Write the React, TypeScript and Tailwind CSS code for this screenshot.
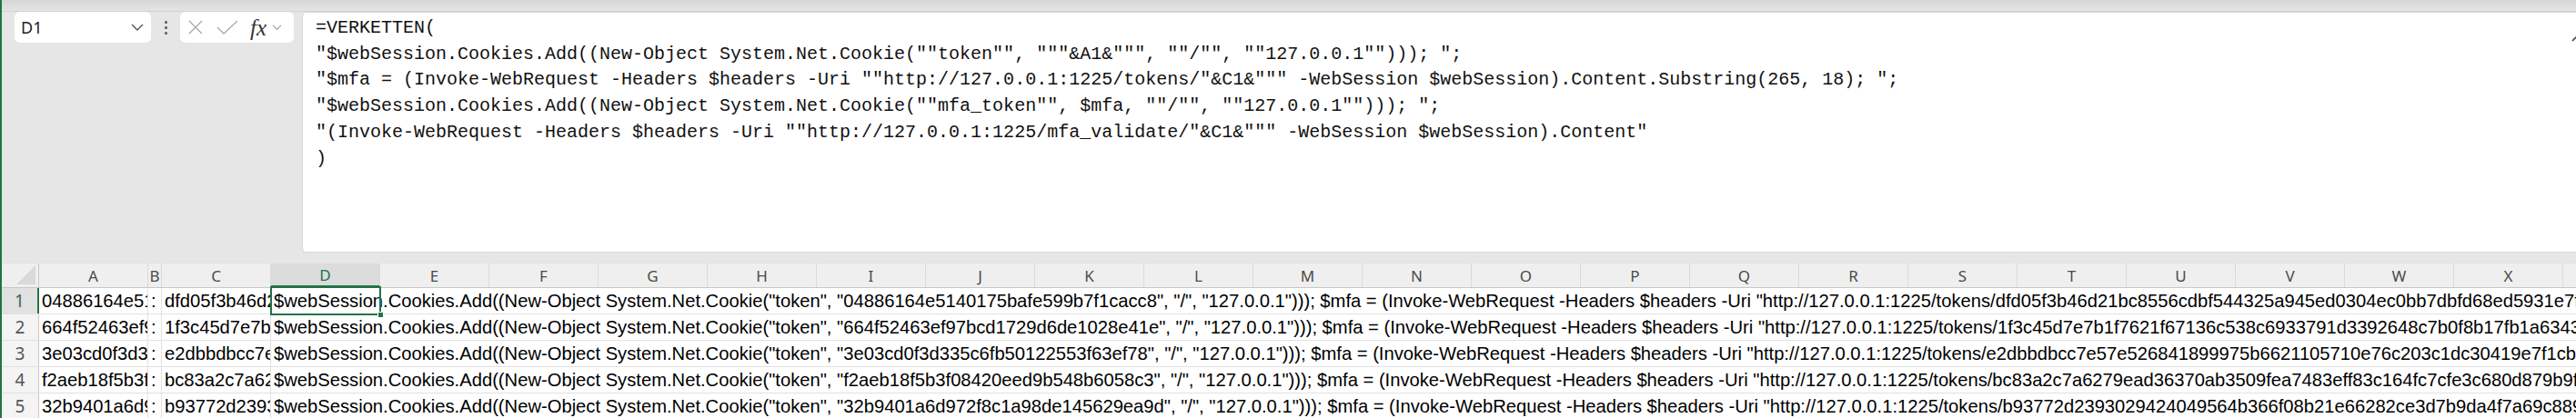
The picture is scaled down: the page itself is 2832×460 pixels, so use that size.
import React from 'react'

const COLS = 'ABCDEFGHIJKLMNOPQRSTUVWXY'.split('')
const colWidth = (c: string) => (c === 'B' ? 'w-[15px]' : 'w-[120px]')

const ROWS = [
  ['04886164e5140175bafe599b7f1cacc8', 'dfd05f3b46d21bc8556cdbf544325a945ed0304ec0bb7dbfd68ed5931e7ff6ec'],
  ['664f52463ef97bcd1729d6de1028e41e', '1f3c45d7e7b1f7621f67136c538c6933791d3392648c7b0f8b17fb1a6343ebc4'],
  ['3e03cd0f3d335c6fb50122553f63ef78', 'e2dbbdbcc7e57e526841899975b6621105710e76c203c1dc30419e7f1cba52d1'],
  ['f2aeb18f5b3f08420eed9b548b6058c3', 'bc83a2c7a6279ead36370ab3509fea7483eff83c164fc7cfe3c680d879b9f9d2'],
  ['32b9401a6d972f8c1a98de145629ea9d', 'b93772d2393029424049564b366f08b21e66282ce3d7b9da4f7a69c889101a7e'],
]

const FORMULA = [
  '=VERKETTEN(',
  '"$webSession.Cookies.Add((New-Object System.Net.Cookie(""token"", """&A1&""", ""/"", ""127.0.0.1""))); ";',
  '"$mfa = (Invoke-WebRequest -Headers $headers -Uri ""http://127.0.0.1:1225/tokens/"&C1&""" -WebSession $webSession).Content.Substring(265, 18); ";',
  '"$webSession.Cookies.Add((New-Object System.Net.Cookie(""mfa_token"", $mfa, ""/"", ""127.0.0.1""))); ";',
  '"(Invoke-WebRequest -Headers $headers -Uri ""http://127.0.0.1:1225/mfa_validate/"&C1&""" -WebSession $webSession).Content"',
  ')',
]

function cellText(a: string, c: string) {
  return (
    `$webSession.Cookies.Add((New-Object System.Net.Cookie("token", "${a}", "/", "127.0.0.1"))); ` +
    `$mfa = (Invoke-WebRequest -Headers $headers -Uri "http://127.0.0.1:1225/tokens/${c}" -WebSession $webSession).Content.Substring(265, 18); ` +
    `$webSession.Cookies.Add((New-Object System.Net.Cookie("mfa_token", $mfa, "/", "127.0.0.1")));`
  )
}

function Chevron({ className }: { className?: string }) {
  return (
    <svg className={className} viewBox="0 0 14 8" fill="none" stroke="currentColor" strokeWidth="1.4">
      <path d="M1 1l6 6 6-6" />
    </svg>
  )
}

export default function App() {
  return (
    <div className="relative h-[460px] w-[2832px] overflow-hidden border-l-2 border-[#217346] bg-[#e6e6e6]">
      {/* ribbon shadow */}
      <div className="h-[13px] border-b border-[#d2d2d2] bg-gradient-to-b from-[#d6d6d6] to-[#e4e4e4]" />

      {/* name box + formula bar */}
      <div className="flex h-[266px] items-start">
        <div className="ml-[14px] flex h-[34px] w-[150px] items-center justify-between rounded-[6px] bg-white pl-[7px] pr-[8px] text-[#222]">
          <span className="font-['Noto_Sans',sans-serif] text-[18px]">D1</span>
          <Chevron className="h-[8px] w-[14px] text-[#555]" />
        </div>
        <div className="flex h-[34px] w-[32px] flex-col items-center justify-center gap-[3px]">
          <span className="h-[3px] w-[3px] rounded-full bg-[#555]" />
          <span className="h-[3px] w-[3px] rounded-full bg-[#555]" />
          <span className="h-[3px] w-[3px] rounded-full bg-[#555]" />
        </div>
        <div className="flex h-[34px] w-[125px] items-center rounded-[6px] bg-white pl-[8px]">
          <svg className="h-[16px] w-[18px] text-[#a8a8a8]" viewBox="0 0 18 16" fill="none" stroke="currentColor" strokeWidth="1.3">
            <path d="M2 1l14 14M16 1L2 15" />
          </svg>
          <svg className="ml-[14px] h-[16px] w-[24px] text-[#a8a8a8]" viewBox="0 0 24 16" fill="none" stroke="currentColor" strokeWidth="1.3">
            <path d="M1 8l7 7L23 1" />
          </svg>
          <span className="ml-[13px] font-['Liberation_Serif',serif] text-[25px] italic leading-none text-[#333]">fx</span>
          <Chevron className="ml-[6px] h-[6px] w-[11px] text-[#888]" />
        </div>
        <div className="relative ml-[9px] mr-[-20px] h-[265px] flex-1 rounded-[5px] border border-[#d8d8d8] bg-white pl-[14px] pt-[3px]">
          {FORMULA.map((l, i) => (
            <div key={i} className="whitespace-pre font-['Liberation_Mono',monospace] text-[20px] leading-[28.7px] text-[#111]">
              {l}
            </div>
          ))}
          <svg className="absolute right-[12px] top-[20px] h-[12px] w-[12px] text-[#333]" viewBox="0 0 12 12" fill="none" stroke="currentColor" strokeWidth="1.5">
            <path d="M1 11L11 1M5 1h6v6" />
          </svg>
        </div>
      </div>

      <div className="h-[11px]" />

      {/* column headers */}
      <div className="flex h-[27px] border-b border-[#c8c8c8] bg-[#efefef] font-['Noto_Sans',sans-serif] text-[17px] text-[#4a4a4a]">
        <div className="relative w-[41px] shrink-0 border-r border-[#c8c8c8]">
          <svg className="absolute bottom-[3px] right-[3px] h-[21px] w-[21px]" viewBox="0 0 21 21">
            <path d="M21 0V21H0Z" fill="#d9d9d9" />
          </svg>
        </div>
        {COLS.map((c) => (
          <div
            key={c}
            className={[
              colWidth(c),
              'flex shrink-0 items-center justify-center border-r border-[#dadada] leading-none',
              c === 'D' ? 'border-b-2 border-b-[#217346] bg-[#dcdcdc] text-[#217346]' : '',
            ].join(' ')}
          >
            {c}
          </div>
        ))}
      </div>

      {/* data rows */}
      {ROWS.map(([a, c], i) => (
        <div key={i} className="flex h-[29px] border-b border-[#e1e1e1] bg-white">
          <div
            className={[
              'flex w-[41px] shrink-0 items-center justify-center font-[\'Noto_Sans\',sans-serif] text-[19px]',
              i === 0 ? 'border-r-2 border-[#217346] bg-[#e1e1e1] text-[#3b6650]' : 'border-r border-[#c8c8c8] bg-[#f4f4f4] text-[#555]',
            ].join(' ')}
          >
            {i + 1}
          </div>
          <div className="flex min-w-0 flex-1 items-center font-['Liberation_Sans',Arial,sans-serif] text-[20.2px] text-black">
            <div className="w-[120px] shrink-0 overflow-hidden whitespace-nowrap border-r border-[#e1e1e1] pl-[3px] leading-[28px]">{a}</div>
            <div className="w-[15px] shrink-0 overflow-hidden whitespace-nowrap border-r border-[#e1e1e1] pl-[3px] leading-[28px]">:</div>
            <div className="w-[120px] shrink-0 overflow-hidden whitespace-nowrap border-r border-[#e1e1e1] pl-[3px] leading-[28px]">{c}</div>
            <div className="min-w-0 flex-1 overflow-hidden whitespace-nowrap pl-[3px] leading-[28px]">{cellText(a, c)}</div>
          </div>
        </div>
      ))}

      {/* active cell D1 */}
      <div className="pointer-events-none absolute left-[295px] top-[315px] h-[32px] w-[122px] border-2 border-[#217346]">
        <span className="absolute bottom-[-5px] right-[-5px] h-[7px] w-[7px] border border-white bg-[#217346]" />
      </div>
    </div>
  )
}
